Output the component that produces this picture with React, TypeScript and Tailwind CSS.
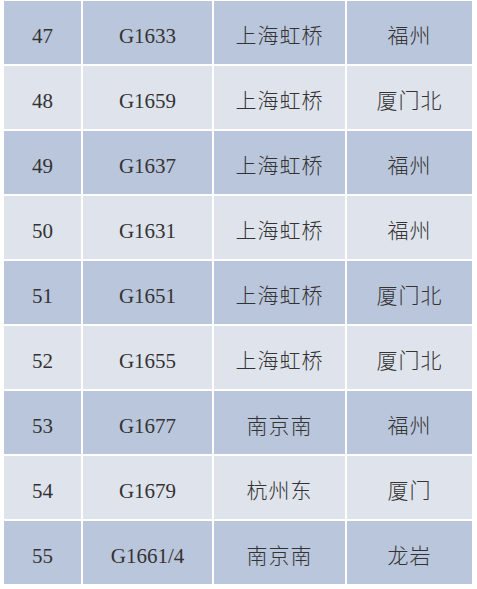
const rows = [
  { no: "47", train: "G1633", from: "上海虹桥", to: "福州" },
  { no: "48", train: "G1659", from: "上海虹桥", to: "厦门北" },
  { no: "49", train: "G1637", from: "上海虹桥", to: "福州" },
  { no: "50", train: "G1631", from: "上海虹桥", to: "福州" },
  { no: "51", train: "G1651", from: "上海虹桥", to: "厦门北" },
  { no: "52", train: "G1655", from: "上海虹桥", to: "厦门北" },
  { no: "53", train: "G1677", from: "南京南", to: "福州" },
  { no: "54", train: "G1679", from: "杭州东", to: "厦门" },
  { no: "55", train: "G1661/4", from: "南京南", to: "龙岩" },
];

export default function App() {
  return (
    <div
      className="w-[477px] h-[589px] bg-white pl-[4px] pt-[1px] overflow-hidden"
      style={{ fontFamily: '"Liberation Serif", "Noto Sans CJK SC", serif' }}
    >
      <div className="flex flex-col gap-[2px] w-[469px]">
        {rows.map((r, i) => (
          <div
            key={r.no}
            className="grid grid-cols-[77px_129px_131px_125px] gap-[2px] h-[63px] text-[21px] text-[#333333]"
          >
            {[r.no, r.train, r.from, r.to].map((c, j) => (
              <div
                key={j}
                className={`flex items-center justify-center pt-[8px] ${
                  i % 2 === 0 ? "bg-[#bac6db]" : "bg-[#dfe3ec]"
                } ${j >= 2 ? "font-light tracking-[1px]" : ""}`}
              >
                {c}
              </div>
            ))}
          </div>
        ))}
      </div>
    </div>
  );
}
